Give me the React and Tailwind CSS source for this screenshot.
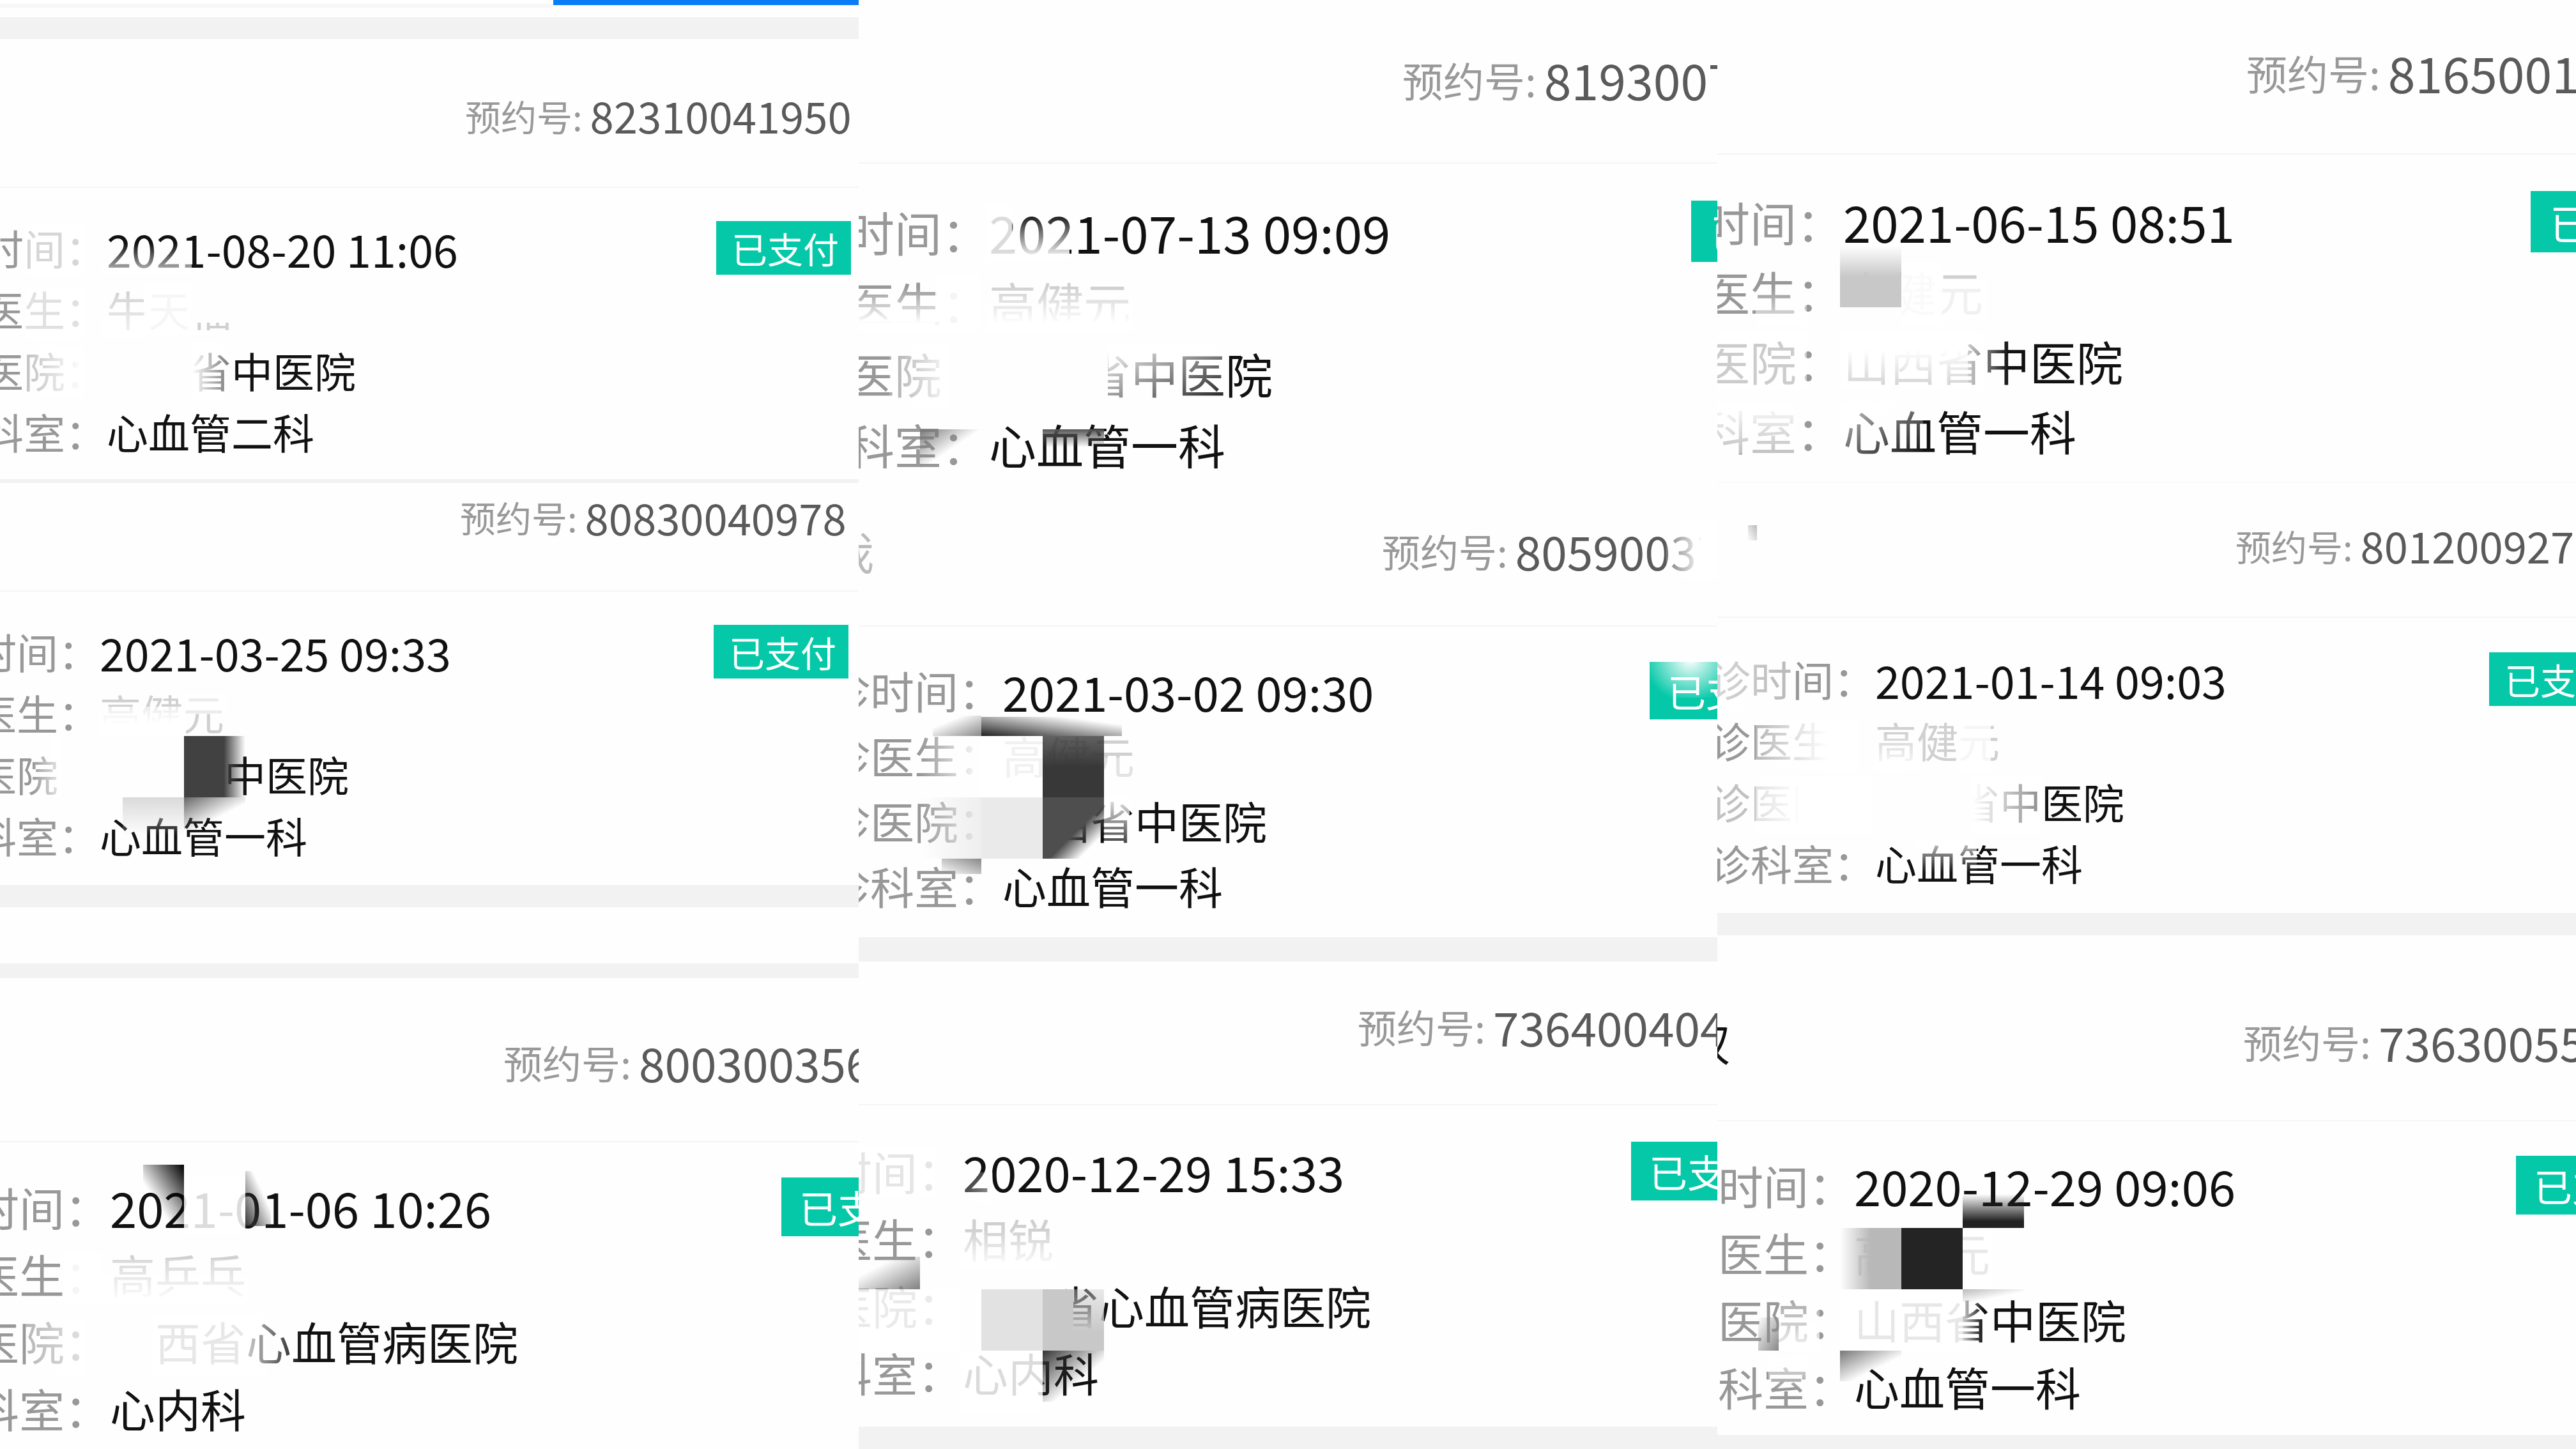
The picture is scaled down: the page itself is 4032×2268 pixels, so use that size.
const SIZES = {
  sm: { tag: 'text-[56px]', no: 'text-[67px]', date: 'text-[70px]', row: 'h-24 text-[65px]', badge: 'h-[84px] pl-6 text-[56px]' },
  md: { tag: 'text-[60px]', no: 'text-[73px]', date: 'text-[74px]', row: 'h-[102px] text-[69px]', badge: 'h-[90px] pl-7 text-[60px]' },
  lg: { tag: 'text-[61px]', no: 'text-[73px]', date: 'text-[76px]', row: 'h-[105px] text-[71px]', badge: 'h-[92px] pl-7 text-[60px]' },
  xl: { tag: 'text-[64px]', no: 'text-[77px]', date: 'text-[78px]', row: 'h-[109px] text-[73px]', badge: 'h-24 pl-[30px] text-[64px]' },
  xxl: { tag: 'text-[64px]', no: 'text-[77px]', date: 'text-[80px]', row: 'h-[111px] text-[74px]', badge: 'h-24 pl-[30px] text-[64px]' },
};

const COLUMNS = [
  [
    {
      no: '82310041950', time: '2021-08-20 11:06', doctor: '牛天福', hospital: '山西省中医院', dept: '心血管二科', status: '已支付',
      size: 'sm', prefix: '', head: 'h-[233px] pt-2', noWidth: 'w-[616px]', label: 'w-[167px]', badge: 'w-[211px] mr-3', body: 'pt-[46px] pb-[26px]',
      smudges: [
        'left-10 top-[290px] h-20 w-[90px] bg-white/60',
        'left-[160px] top-[320px] h-[50px] w-[140px] bg-linear-to-b from-transparent to-white/80',
        'left-10 top-[390px] h-20 w-[90px] bg-white/70',
        'left-[160px] top-[390px] h-20 w-[70px] bg-linear-to-b from-transparent to-white/80',
        'left-[225px] top-[380px] h-[84px] w-20 bg-white/80',
        'left-[300px] top-[380px] h-16 w-[70px] bg-[#fefefe]',
        'left-10 top-[480px] h-20 w-[90px] bg-linear-to-r from-white/40 to-white',
        'left-[160px] top-[475px] h-[90px] w-[140px] bg-[#fefefe]',
        'left-[300px] top-[475px] h-[90px] w-[62px] bg-linear-to-r from-white to-white/40',
      ],
    },
    {
      no: '80830040978', time: '2021-03-25 09:33', doctor: '高健元', hospital: '山西省中医院', dept: '心血管一科', status: '已支付',
      size: 'sm', prefix: '', head: 'h-[170px] pb-[62px]', noWidth: 'w-[624px]', label: 'w-[156px]', badge: 'w-[211px] mr-4', body: 'pt-[46px] pb-[29px]',
      smudges: [
        'left-[156px] top-[350px] h-[46px] w-[135px] bg-linear-to-b from-white/60 to-white to-60%',
        'left-[290px] top-[330px] h-8 w-16 bg-white/60',
        'left-[50px] top-[396px] h-24 w-[46px] bg-linear-to-r from-transparent to-white/80',
        'left-24 top-[396px] h-24 w-48 bg-[#fefefe]',
        'left-72 top-[396px] h-24 w-24 bg-linear-to-r from-[#414141] from-65% to-transparent',
        'left-48 top-[492px] h-[60px] w-24 bg-linear-to-b from-[#dadada] to-transparent',
        'left-72 top-[492px] h-[50px] w-24 bg-linear-to-br from-[#666] to-transparent to-60%',
      ],
    },
    {
      no: '800300356', time: '2021-01-06 10:26', doctor: '高乒乓', hospital: '山西省心血管病医院', dept: '心内科', status: '已支',
      size: 'lg', prefix: '', head: 'h-[257px] pt-2', noWidth: 'w-[556px]', label: 'w-[172px]', badge: 'w-[121px]', body: 'pt-12',
      smudges: [
        'left-[224px] top-[292px] h-24 w-16 bg-linear-to-bl from-black to-transparent to-65%',
        'left-72 top-[310px] h-[90px] w-24 bg-white/85',
        'left-96 top-[302px] h-[86px] w-10 bg-linear-to-tr from-[#333] to-transparent to-65%',
        'left-[160px] top-[440px] h-[70px] w-[230px] bg-linear-to-b from-white/20 to-white',
        'left-[100px] top-[430px] h-20 w-[60px] bg-white/90',
        'left-10 top-[535px] h-[90px] w-[90px] bg-linear-to-r from-white/30 to-white/70',
        'left-[160px] top-[525px] h-[100px] w-20 bg-[#fefefe]',
        'left-60 top-[525px] h-[100px] w-[144px] bg-white/90',
        'left-96 top-[525px] h-[100px] w-[90px] bg-linear-to-r from-white/80 to-transparent',
      ],
    },
  ],
  [
    {
      no: '8193007', time: '2021-07-13 09:09', doctor: '高健元', hospital: '山西省中医院', dept: '心血管一科', status: '已',
      size: 'xxl', prefix: '', head: 'h-[256px] pb-1.5', noWidth: 'w-[493px]', label: 'w-[204px]', badge: 'w-[41px]', body: 'pt-[50px] pb-1.5',
      smudges: [
        'left-[200px] top-[320px] h-[90px] w-10 bg-white/85',
        'left-60 top-[335px] h-[70px] w-[90px] bg-linear-to-b from-transparent to-white',
        'left-0 top-[450px] h-[70px] w-[120px] bg-linear-to-b from-transparent to-white to-80%',
        'left-[120px] top-[430px] h-[90px] w-[70px] bg-white/90',
        'left-[200px] top-[450px] h-[70px] w-[230px] bg-linear-to-b from-transparent to-white to-80%',
        'left-12 top-[540px] h-[100px] w-[100px] bg-linear-to-r from-white/20 to-white',
        'left-[140px] top-[540px] h-[100px] w-[250px] bg-[#fefefe]',
        'left-[390px] top-[540px] h-[100px] w-[180px] bg-linear-to-br from-white to-transparent',
        'left-24 top-[672px] h-16 w-24 bg-linear-to-br from-[#777] to-transparent to-50%',
        'left-72 top-[672px] h-7 w-24 bg-linear-to-b from-[#555] to-transparent',
      ],
    },
    {
      no: '80590037', time: '2021-03-02 09:30', doctor: '高健元', hospital: '山西省中医院', dept: '心血管一科', status: '已支',
      size: 'md', prefix: '诊', head: 'h-[225px] pb-3', noWidth: 'w-[525px]', label: 'w-[225px]', badge: 'w-[106px]', body: 'pt-[49px] pb-[29px]',
      stub: '我', stubClass: 'w-6 text-[#bbb]',
      smudges: [
        'right-0 top-[60px] h-[90px] w-20 bg-linear-to-r from-white/20 to-white to-70%',
        'left-[116px] top-[364px] h-8 w-[76px] bg-linear-to-tl from-[#888] to-transparent to-70%',
        'left-48 top-[366px] h-[30px] w-[220px] bg-linear-to-tr from-[#222] to-transparent to-80%',
        'left-24 top-[396px] h-24 w-24 bg-linear-to-r from-transparent to-[#fefefe]',
        'left-48 top-[396px] h-24 w-24 bg-white/70',
        'left-72 top-[396px] h-24 w-24 bg-linear-to-b from-[#3a3a3a]/80 to-[#383838] to-50%',
        'left-96 top-[430px] h-[50px] w-12 bg-white/40',
        'left-24 top-[492px] h-24 w-24 bg-linear-to-r from-transparent to-[#eee]',
        'left-48 top-[492px] h-24 w-24 bg-[#eaeaea]',
        'left-72 top-[492px] h-24 w-24 bg-linear-to-br from-[#4e4e4e] from-55% to-transparent to-80%',
        'left-96 top-[492px] h-24 w-10 bg-linear-to-b from-white/90 to-transparent',
        'left-[130px] top-[588px] h-6 w-[62px] bg-linear-to-tr from-transparent to-[#888]',
        'right-0 top-[276px] h-[60px] w-[106px] bg-radial-[at_60%_0%] from-white to-transparent to-80%',
      ],
    },
    {
      no: '736400404', time: '2020-12-29 15:33', doctor: '相锐', hospital: '山西省心血管病医院', dept: '心内科', status: '已支',
      size: 'lg', prefix: '', head: 'h-[225px] pb-5', noWidth: 'w-[563px]', label: 'w-[163px]', badge: 'w-[135px]', body: 'pt-[50px] pb-[33px]',
      smudges: [
        'left-0 top-[290px] h-20 w-[120px] bg-white/75',
        'left-[160px] top-[330px] h-[50px] w-[50px] bg-linear-to-br from-transparent to-white/70',
        'left-[160px] top-[420px] h-[60px] w-[150px] bg-linear-to-b from-transparent to-white',
        'left-0 top-[462px] h-[51px] w-24 bg-linear-to-br from-transparent from-30% to-[#808080]',
        'left-0 top-[513px] h-24 w-[160px] bg-white/80',
        'left-[160px] top-[490px] h-[119px] w-8 bg-[#fefefe]',
        'left-48 top-[490px] h-6 w-28 bg-[#fefefe]',
        'left-48 top-[513px] h-24 w-24 bg-[#e2e2e2]',
        'left-72 top-[513px] h-24 w-12 bg-[#c8c8c8]',
        'left-[336px] top-[513px] h-24 w-12 bg-linear-to-b from-[#c8c8c8]/40 to-[#c8c8c8] to-70%',
        'left-[160px] top-[609px] h-24 w-32 bg-white/85',
        'left-72 top-[609px] h-20 w-24 bg-linear-to-br from-[#333] to-transparent to-60%',
      ],
    },
  ],
  [
    {
      no: '8165001', time: '2021-06-15 08:51', doctor: '高健元', hospital: '山西省中医院', dept: '心血管一科', status: '已',
      size: 'xl', prefix: '', head: 'h-[242px] pb-3.5', noWidth: 'w-[516px]', label: 'w-[197px]', badge: 'w-[71px]', body: 'pt-[50px] pb-[26px]',
      smudges: [
        'left-[60px] top-[450px] h-[60px] w-20 bg-linear-to-b from-transparent to-white/80',
        'left-48 top-[385px] h-24 w-24 bg-linear-to-b from-transparent to-[#c8c8c8] to-50%',
        'left-48 top-[481px] h-8 w-24 bg-[#fefefe]',
        'left-72 top-[410px] h-[100px] w-16 bg-white/90',
        'left-[350px] top-[440px] h-[60px] w-[70px] bg-white/70',
        'left-0 top-[520px] h-[90px] w-[140px] bg-white/50',
        'left-48 top-[520px] h-[90px] w-[200px] bg-linear-to-b from-white from-30% to-white/80',
        'left-[392px] top-[520px] h-[90px] w-16 bg-linear-to-r from-white/80 to-transparent',
        'left-0 top-[630px] h-20 w-[120px] bg-linear-to-b from-white to-white/40',
        'left-48 top-[630px] h-20 w-[130px] bg-linear-to-br from-white/80 to-transparent',
      ],
    },
    {
      no: '801200927', time: '2021-01-14 09:03', doctor: '高健元', hospital: '山西省中医院', dept: '心血管一科', status: '已支',
      size: 'sm', prefix: '诊', head: 'h-[211px] pb-3.5', noWidth: 'w-[533px]', label: 'w-[247px]', badge: 'w-[136px]', body: 'pt-12 pb-[30px]',
      smudges: [
        'left-12 top-[66px] h-6 w-3.5 bg-linear-to-bl from-[#bbb] to-transparent',
        'left-0 top-[270px] h-[90px] w-[120px] bg-linear-to-r from-white/60 to-white/30',
        'left-[60px] top-[370px] h-20 w-[160px] bg-linear-to-r from-white/30 to-white to-70%',
        'left-[245px] top-[390px] h-[60px] w-[70px] bg-linear-to-b from-transparent to-white',
        'left-[380px] top-[370px] h-20 w-12 bg-white/80',
        'left-0 top-[460px] h-[90px] w-[60px] bg-white/40',
        'left-[60px] top-[460px] h-[90px] w-[180px] bg-linear-to-r from-white/70 to-white to-40%',
        'left-60 top-[460px] h-[90px] w-[160px] bg-[#fefefe]',
        'left-[400px] top-[460px] h-[90px] w-[110px] bg-linear-to-r from-white to-white/50',
        'left-[310px] top-[560px] h-[50px] w-24 bg-linear-to-b from-white/80 to-transparent',
      ],
    },
    {
      no: '73630055', time: '2020-12-29 09:06', doctor: '高健元', hospital: '山西省中医院', dept: '心血管一科', status: '已支',
      size: 'lg', prefix: '', head: 'h-[291px] pt-11', noWidth: 'w-[521px]', label: 'w-[214px]', badge: 'w-[94px]', body: 'pt-[47px] pb-[24px]',
      stub: '权', stubClass: 'w-5 text-[#111]',
      smudges: [
        'left-96 top-[405px] h-[53px] w-24 bg-linear-to-b from-transparent to-[#222] to-80%',
        'left-48 top-[458px] h-24 w-24 bg-linear-to-r from-transparent to-[#b8b8b8] to-50%',
        'left-72 top-[458px] h-24 w-24 bg-[#242424]',
        'left-96 top-[458px] h-24 w-12 bg-white/50',
        'left-24 top-[554px] h-24 w-16 bg-linear-to-b from-transparent to-white/90',
        'left-48 top-[554px] h-24 w-48 bg-white/90',
        'left-96 top-[554px] h-24 w-8 bg-linear-to-r from-white/80 to-transparent',
        'left-96 top-[554px] h-5 w-24 bg-linear-to-br from-[#bbb] to-transparent to-60%',
        'left-16 top-[598px] h-[52px] w-8 bg-linear-to-br from-transparent to-[#888]',
        'left-48 top-[650px] h-12 w-24 bg-linear-to-br from-[#777] to-transparent to-60%',
        'left-20 top-[660px] h-[50px] w-16 bg-linear-to-b from-white/90 to-transparent',
      ],
    },
  ],
];

function Field({ label, record, size, children }) {
  return (
    <div className={`flex items-center whitespace-nowrap ${size.row}`}>
      <dt className={`flex shrink-0 justify-end overflow-hidden text-[#989898] ${record.label}`}>
        {record.prefix}{label}：
      </dt>
      {children}
    </div>
  );
}

function RecordCard({ record }) {
  const size = SIZES[record.size];

  return (
    <article className="relative">
      <header className={`flex items-center border-b-2 border-[#f5f5f5] ${record.head}`}>
        {record.stub && (
          <span className={`flex shrink-0 justify-end overflow-hidden text-[70px] ${record.stubClass}`}>{record.stub}</span>
        )}
        <p className={`ml-auto flex shrink-0 items-center gap-3 overflow-hidden whitespace-nowrap ${record.noWidth}`}>
          <span className={`text-[#999] ${size.tag}`}>预约号:</span>
          <span className={`text-[#5a5a5a] ${size.no}`}>{record.no}</span>
        </p>
      </header>

      <dl className={record.body}>
        <Field label="时间" record={record} size={size}>
          <dd className={size.date}>{record.time}</dd>
          <dd className={`ml-auto flex shrink-0 items-center overflow-hidden bg-[#05c8a8] text-white ${size.badge} ${record.badge}`}>
            {record.status}
          </dd>
        </Field>
        <Field label="医生" record={record} size={size}>
          <dd className="text-[#d0d0d0]">{record.doctor}</dd>
        </Field>
        <Field label="医院" record={record} size={size}>
          <dd>{record.hospital}</dd>
        </Field>
        <Field label="科室" record={record} size={size}>
          <dd>{record.dept}</dd>
        </Field>
      </dl>

      {/* Brush marks over the private fields */}
      {record.smudges.map((smudge) => (
        <div key={smudge} className={`absolute ${smudge}`} />
      ))}
    </article>
  );
}

export default function App() {
  const [left, middle, right] = COLUMNS;

  return (
    <main className="grid min-h-screen grid-cols-3 overflow-hidden bg-[#fefefe] font-['Noto_Sans_CJK_SC',sans-serif] leading-normal text-[#111]">
      <section className="min-w-0">
        {/* Active tab underline */}
        <div className="flex h-[27px] items-start">
          <div className="mt-1.5 h-1.5 flex-1 bg-[#f7f7f7]" />
          <div className="h-2 w-[478px] bg-[#0a7cf5]" />
        </div>
        <div className="h-[34px] bg-[#f2f2f2]" />
        <RecordCard record={left[0]} />
        <div className="h-1.5 bg-[#f2f2f2]" />
        <RecordCard record={left[1]} />
        <div className="h-[35px] bg-[#f2f2f2]" />
        <div className="h-[88px]" />
        <div className="h-[23px] bg-[#f2f2f2]" />
        <RecordCard record={left[2]} />
      </section>

      <section className="min-w-0">
        <RecordCard record={middle[0]} />
        <RecordCard record={middle[1]} />
        <div className="h-[38px] bg-[#f2f2f2]" />
        <RecordCard record={middle[2]} />
        <div className="h-[39px] bg-[#f2f2f2]" />
      </section>

      <section className="min-w-0">
        <RecordCard record={right[0]} />
        <div className="h-0.5 bg-[#fafafa]" />
        <RecordCard record={right[1]} />
        <div className="h-[35px] bg-[#f2f2f2]" />
        <RecordCard record={right[2]} />
        <div className="h-[22px] bg-[#f2f2f2]" />
      </section>
    </main>
  );
}
